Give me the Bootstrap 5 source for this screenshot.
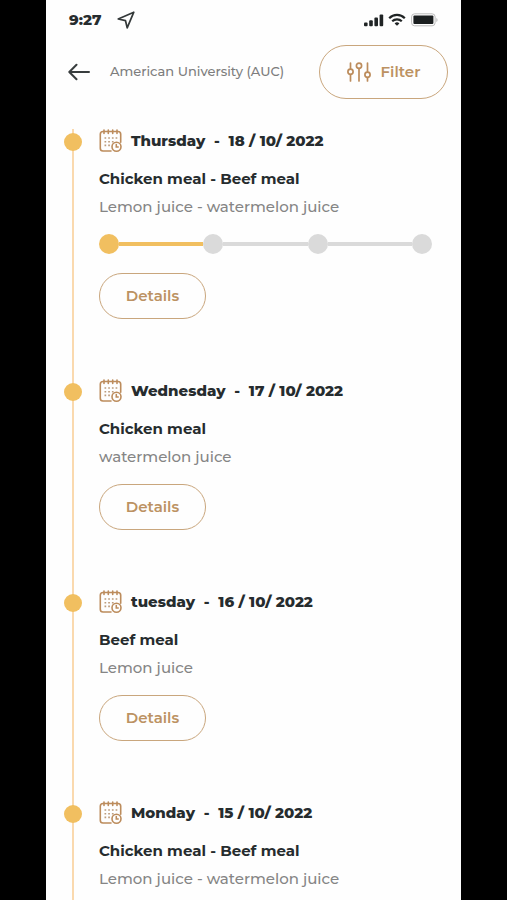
<!DOCTYPE html>
<html lang="en">
<head>
<meta charset="utf-8">
<meta name="viewport" content="width=device-width, initial-scale=1">
<title>Meal schedule</title>
<link href="https://cdn.jsdelivr.net/npm/bootstrap@5.3.0/dist/css/bootstrap.min.css" rel="stylesheet">
<style>
  :root { --gold: #f1bf60; --bronze: #bc9262; --ink: #262c2e; --soft: #7d7d7d; --track: #dadada; }
  body { background: #000; padding: 0 46px; font-family: Montserrat, Inter, "Liberation Sans", sans-serif; color: var(--ink); }
  .screen { background: #fefefe; min-height: 100vh; }
  .status { height: 40px; padding: 0 23px; }
  .clock { font-size: 15px; font-weight: 800; }
  .topbar { padding: 5px 13px 0 22px; }
  .place { font-size: 13px; font-weight: 500; color: var(--soft); margin-left: 20px; }
  .btn-line { --bs-btn-color: var(--bronze); --bs-btn-border-color: #c9a67d; --bs-btn-hover-color: #fff; --bs-btn-hover-bg: var(--bronze); --bs-btn-hover-border-color: var(--bronze); font-size: 15px; font-weight: 600; line-height: 20px; }
  .btn-filter { height: 54px; width: 129px; gap: 10px; }
  .btn-details { height: 46px; width: 107px; }
  .schedule { padding: 30px 29px 0 18px; }
  .entry { gap: 17px; }
  .rail { width: 18px; justify-items: center; }
  .rail > * { grid-area: 1 / 1; }
  .rail-line { width: 2px; background: #fad9ae; }
  .rail-dot { width: 18px; height: 18px; margin-top: 4px; background: var(--gold); }
  .entry-body { padding-bottom: 60px; }
  .entry:last-child .entry-body { padding-bottom: 0; }
  .day { font-size: 15px; font-weight: 800; line-height: 24px; gap: 8px; margin-bottom: 12px; }
  .meal { font-size: 15px; font-weight: 700; line-height: 28px; }
  .drink { font-size: 15px; font-weight: 500; line-height: 28px; color: #858585; margin-bottom: 13px; }
  .entry:last-child .drink { margin-bottom: 0; }
  .steps { margin-bottom: 19px; }
  .step-dot { width: 20px; height: 20px; background: var(--track); }
  .step-line { height: 4px; background: var(--track); }
  .step-dot.reached, .step-line.reached { background: var(--gold); }
</style>
</head>
<body>
<svg class="d-none" xmlns="http://www.w3.org/2000/svg">
  <symbol id="calendar" viewBox="0 0 24 24">
    <g fill="none" stroke="#bc8c5c" stroke-width="1.6" stroke-linecap="round">
      <path d="M12 22H4a2.700 2.700 0 0 1-2.700-2.700V5.200A2.700 2.700 0 0 1 4 2.500h15a2.700 2.700 0 0 1 2.700 2.700v8"/>
      <path d="M5 1v3.500M9.300 1v3.500M13.700 1v3.500M18 1v3.500"/>
      <circle cx="17.500" cy="17.800" r="4.500"/>
      <path d="M17.300 15.500v2.500h1.900"/>
    </g>
    <path d="M5.500 9h13M5.500 12.700h10M5.500 16.400h6" fill="none" stroke="#bc9c7c" stroke-width="1.600" stroke-dasharray="1.700 2"/>
  </symbol>
</svg>
<main class="screen d-flex flex-column">
  <div class="status d-flex align-items-center justify-content-between">
    <div class="d-flex align-items-center gap-3">
      <span class="clock">9:27</span>
      <svg width="18" height="18" viewBox="0 0 18 18" fill="none" stroke="#333839" stroke-width="1.700" stroke-linejoin="round" aria-hidden="true"><path d="M16.800 1.200 1.200 8l7.300 1.700 1.700 7.100z"/></svg>
    </div>
    <div class="d-flex align-items-center gap-1">
      <svg width="20" height="14" viewBox="0 0 20 14" fill="#202425" aria-hidden="true"><rect y="9.500" width="3.600" height="3.700" rx="1"/><rect x="5.200" y="7.200" width="3.600" height="6" rx="1"/><rect x="10.400" y="4.500" width="3.600" height="8.700" rx="1"/><rect x="15.600" y="1.500" width="3.600" height="11.700" rx="1"/></svg>
      <svg width="18" height="14" viewBox="0 0 18 14" fill="none" stroke="#202425" stroke-width="2.200" aria-hidden="true"><path d="M1.200 5.200a11 11 0 0 1 15.600 0M4.200 8.300a6.800 6.800 0 0 1 9.600 0"/><path d="M9 12.800 6.600 10.400a3.400 3.400 0 0 1 4.800 0z" fill="#202425" stroke="none"/></svg>
      <svg width="28" height="14" viewBox="0 0 28 14" aria-hidden="true"><rect x="1.600" y=".800" width="23.500" height="12" rx="3" fill="#fff" stroke="#bdbdbd"/><rect x="3.400" y="2.600" width="20" height="8.400" rx="1" fill="#1b1f20"/><path d="M26.300 5v4c1.700-.800 1.700-3.200 0-4z" fill="#bdbdbd"/></svg>
    </div>
  </div>

  <header class="topbar d-flex align-items-center">
    <a href="#" class="d-flex" aria-label="Back"><svg width="22" height="18" viewBox="0 0 22 18" fill="none" stroke="#383d3e" stroke-width="2" stroke-linecap="round" stroke-linejoin="round"><path d="M21 9H1.500M8.500 1.800 1.300 9l7.200 7.200"/></svg></a>
    <span class="place text-nowrap">American University (AUC)</span>
    <button type="button" class="btn btn-line btn-filter rounded-pill ms-auto d-flex align-items-center justify-content-center">
      <svg width="24" height="20" viewBox="0 0 24 20" fill="none" stroke="#bc8c5c" stroke-width="1.700" stroke-linecap="round" aria-hidden="true"><path d="M3.500 1v6M3.500 12.500V19M12 6.500V19M20.500 1v9M20.500 15.500V19"/><circle cx="3.500" cy="9.800" r="2.600"/><circle cx="12" cy="3.800" r="2.600"/><circle cx="20.500" cy="12.800" r="2.600"/></svg>
      Filter
    </button>
  </header>

  <section class="schedule d-flex flex-column flex-grow-1">
    <article class="entry d-flex">
      <div class="rail d-grid flex-shrink-0"><span class="rail-line"></span><span class="rail-dot rounded-circle"></span></div>
      <div class="entry-body flex-grow-1">
        <h2 class="day d-flex"><svg width="24" height="24" aria-hidden="true"><use href="#calendar"/></svg><span>Thursday&nbsp; -&nbsp; 18 / 10/ 2022</span></h2>
        <div class="meal">Chicken meal - Beef meal</div>
        <div class="drink">Lemon juice - watermelon juice</div>
        <div class="steps d-flex align-items-center">
          <span class="step-dot reached rounded-circle"></span><span class="step-line reached flex-fill"></span>
          <span class="step-dot rounded-circle"></span><span class="step-line flex-fill"></span>
          <span class="step-dot rounded-circle"></span><span class="step-line flex-fill"></span>
          <span class="step-dot rounded-circle"></span>
        </div>
        <button type="button" class="btn btn-line btn-details rounded-pill d-block">Details</button>
      </div>
    </article>
    <article class="entry d-flex">
      <div class="rail d-grid flex-shrink-0"><span class="rail-line"></span><span class="rail-dot rounded-circle"></span></div>
      <div class="entry-body flex-grow-1">
        <h2 class="day d-flex"><svg width="24" height="24" aria-hidden="true"><use href="#calendar"/></svg><span>Wednesday&nbsp; -&nbsp; 17 / 10/ 2022</span></h2>
        <div class="meal">Chicken meal</div>
        <div class="drink">watermelon juice</div>
        <button type="button" class="btn btn-line btn-details rounded-pill d-block">Details</button>
      </div>
    </article>
    <article class="entry d-flex">
      <div class="rail d-grid flex-shrink-0"><span class="rail-line"></span><span class="rail-dot rounded-circle"></span></div>
      <div class="entry-body flex-grow-1">
        <h2 class="day d-flex"><svg width="24" height="24" aria-hidden="true"><use href="#calendar"/></svg><span>tuesday&nbsp; -&nbsp; 16 / 10/ 2022</span></h2>
        <div class="meal">Beef meal</div>
        <div class="drink">Lemon juice</div>
        <button type="button" class="btn btn-line btn-details rounded-pill d-block">Details</button>
      </div>
    </article>
    <article class="entry d-flex flex-grow-1">
      <div class="rail d-grid flex-shrink-0"><span class="rail-line"></span><span class="rail-dot rounded-circle"></span></div>
      <div class="entry-body flex-grow-1">
        <h2 class="day d-flex"><svg width="24" height="24" aria-hidden="true"><use href="#calendar"/></svg><span>Monday&nbsp; -&nbsp; 15 / 10/ 2022</span></h2>
        <div class="meal">Chicken meal - Beef meal</div>
        <div class="drink">Lemon juice - watermelon juice</div>
      </div>
    </article>
  </section>
</main>
<script src="https://cdn.jsdelivr.net/npm/bootstrap@5.3.0/dist/js/bootstrap.bundle.min.js"></script>
</body>
</html>
